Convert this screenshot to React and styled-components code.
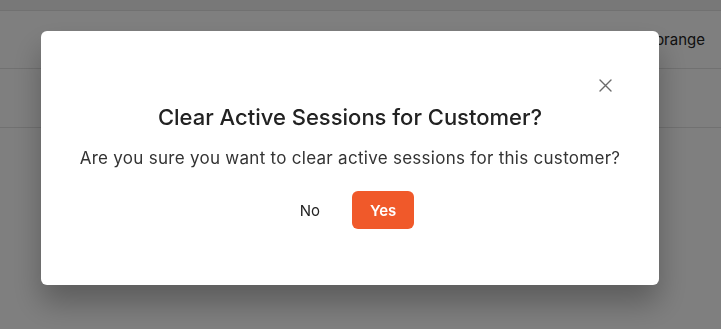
import React from 'react';
import styled, { createGlobalStyle } from 'styled-components';

const Global = createGlobalStyle`
  html, body { margin: 0; padding: 0; }
  body {
    font-family: Inter, "Noto Sans", sans-serif;
    background: #fff;
    overflow: hidden;
  }
`;

const Page = styled.div`
  height: 329px;
  display: flex;
  flex-direction: column;
`;

const TableRow = styled.div`
  height: ${p => p.h}px;
  background: ${p => p.bg || '#fff'};
  border-bottom: 1px solid #e2e2e2;
  display: flex;
  align-items: center;
  justify-content: flex-end;
  padding-right: 16px;
  font-size: 15px;
  color: #222;
  box-sizing: border-box;
`;

const Overlay = styled.div`
  position: fixed;
  inset: 0;
  background: rgba(0, 0, 0, 0.5);
`;

const Modal = styled.div`
  margin: 31px 0 0 41px;
  width: 618px;
  height: 254px;
  box-sizing: border-box;
  background: #fff;
  border-radius: 6px;
  box-shadow: 0 18px 30px rgba(0, 0, 0, 0.28);
  padding: 44px 42px 0 42px;
  display: flex;
  flex-direction: column;
  align-items: center;
`;

const Header = styled.div`
  align-self: stretch;
  display: flex;
  justify-content: flex-end;
  height: 20px;
`;

const Close = styled.button`
  border: 0;
  background: none;
  padding: 0;
  margin-right: 2px;
  width: 20px;
  height: 20px;
  display: flex;
  align-items: center;
  justify-content: center;
  cursor: pointer;
  color: #6b6b6b;
`;

const Title = styled.h2`
  margin: 7px 0 0;
  font-size: 22px;
  line-height: 30px;
  font-weight: 500;
  color: #222;
  letter-spacing: 0;
`;

const Body = styled.p`
  margin: 14px 0 0;
  font-size: 17px;
  line-height: 24px;
  color: #333;
  letter-spacing: 0.28px;
  white-space: nowrap;
`;

const Actions = styled.div`
  margin-top: 21px;
  padding-right: 6px;
  display: flex;
  gap: 12px;
  align-items: center;
`;

const Button = styled.button`
  height: 38px;
  padding: 0 ${p => (p.primary ? 18 : 20)}px;
  border: 0;
  border-radius: 6px;
  font-family: inherit;
  font-size: 15px;
  font-weight: ${p => (p.primary ? 600 : 400)};
  background: ${p => (p.primary ? '#f0592a' : 'transparent')};
  color: ${p => (p.primary ? '#fff' : '#222')};
  cursor: pointer;
`;

export default function App() {
  return (
    <>
      <Global />
      <Page>
        <TableRow h={11} bg="#f0f0f0" />
        <TableRow h={58}>orange</TableRow>
        <TableRow h={59} />
      </Page>
      <Overlay>
        <Modal>
          <Header>
            <Close aria-label="Close">
              <svg width="13" height="13" viewBox="0 0 13 13" fill="none" stroke="currentColor" strokeWidth="1.4" strokeLinecap="round">
                <path d="M1 1L12 12M12 1L1 12" />
              </svg>
            </Close>
          </Header>
          <Title>Clear Active Sessions for Customer?</Title>
          <Body>Are you sure you want to clear active sessions for this customer?</Body>
          <Actions>
            <Button>No</Button>
            <Button primary>Yes</Button>
          </Actions>
        </Modal>
      </Overlay>
    </>
  );
}
